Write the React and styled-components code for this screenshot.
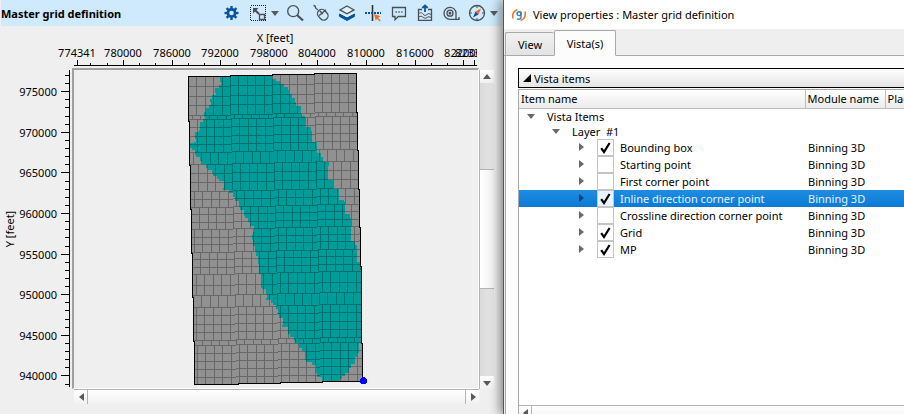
import React from 'react'
import styled, { createGlobalStyle } from 'styled-components'

const GlobalStyle = createGlobalStyle`
  * {
    box-sizing: border-box;
  }
  body {
    margin: 0;
    overflow: hidden;
    background: #efefef;
    color: #000;
    font-family: 'Noto Sans', 'Open Sans', sans-serif;
    font-size: 11px;
    line-height: 15px;
  }
  button {
    border: 0;
    padding: 0;
    background: none;
    color: inherit;
    font: inherit;
  }
`

const Workspace = styled.div`
  display: grid;
  grid-template-columns: minmax(0, 503fr) minmax(0, 401fr);
  height: 100vh;
`

/* map view */

const MapView = styled.section`
  display: flex;
  flex-direction: column;
  min-width: 0;
  padding: 0 2px 11px 1px;
`

const TitleBar = styled.header`
  display: flex;
  align-items: center;
  height: 26px;
  flex: none;
  background: #cfeafc;
`

const Title = styled.h1`
  flex: 1;
  margin: 0;
  font-size: 11px;
  font-weight: 700;
  white-space: nowrap;
`

const Tool = styled.button`
  display: flex;
  align-items: center;
  justify-content: ${props => props.$narrow ? 'flex-start' : 'center'};
  width: ${props => props.$narrow ? 11 : 26}px;
  height: 26px;
`

const Chart = styled.div`
  flex: 1;
  min-height: 0;
  display: grid;
  grid-template-columns: 71px minmax(0, 1fr) 15px;
  grid-template-rows: 42px minmax(0, 1fr) 15px;
  padding-right: 7px;
`

const Axis = styled.svg`
  display: block;
  width: calc(100% - 2px);
  height: 100%;
  overflow: hidden;
  grid-column: ${props => props.$column};
  grid-row: ${props => props.$row};
  font-size: 11px;

  line {
    stroke: #000;
    shape-rendering: crispEdges;
  }
`

const Plot = styled.div`
  grid-column: 2;
  grid-row: 2;
  overflow: hidden;
  border: solid;
  border-width: 2px 1px 1px 2px;
  border-color: #a0a0a0 #fff #fff #a0a0a0;

  svg {
    display: block;
  }
`

const ScrollBar = styled.div`
  display: flex;
  flex-direction: ${props => props.$vertical ? 'column' : 'row'};
  grid-column: ${props => props.$vertical ? 3 : 2};
  grid-row: ${props => props.$vertical ? 2 : 3};
  border: solid #b4b4b4;
  border-width: ${props => props.$vertical ? '0 0 0 1px' : '1px 0 0 0'};
  margin: ${props => props.$vertical ? '2px 0 0 0' : '0 0 0 2px'};
  background: linear-gradient(${props => props.$vertical ? 'to right' : 'to bottom'}, #dadada, #e6e6e6);
`

const Arrow = styled.button`
  display: flex;
  align-items: center;
  justify-content: center;
  flex: 0 0 13px;
  background: linear-gradient(#fff, #f1f1f1);
`

const Groove = styled.div`
  flex: ${props => props.$size} 1 0;
`

const Handle = styled.div`
  flex: ${props => props.$size} 1 0;
  border: solid #b4b4b4;
  border-width: ${props => props.$vertical ? '1px 0' : '0 1px'};
  background: linear-gradient(${props => props.$vertical ? 'to right' : 'to bottom'}, #fff, #f1f1f1);
`

/* properties dialog */

const Dialog = styled.section`
  position: relative;
  display: flex;
  flex-direction: column;
  min-width: 0;
  border-left: 1px solid #555;
  background: #efefef;
  box-shadow: -3px 0 10px rgba(0, 0, 0, 0.45);
`

const DialogTitle = styled.header`
  display: flex;
  align-items: center;
  gap: 7px;
  flex: none;
  height: 29px;
  padding-left: 8px;
  background: #fff;
  white-space: nowrap;

  h2 {
    margin: 0;
    font-size: 11px;
    font-weight: 400;
  }
`

const Tabs = styled.div`
  display: flex;
  align-items: flex-end;
  flex: none;
  height: 27px;
  padding-left: 1px;
  box-shadow: inset 0 -1px #a9a9a9;
`

const Tab = styled.button`
  width: ${props => props.$active ? 62 : 49}px;
  height: ${props => props.$active ? 26 : 24}px;
  border: 1px solid #a9a9a9;
  border-right-width: ${props => props.$active ? 1 : 0}px;
  border-bottom-color: ${props => props.$active ? '#fcfcfc' : '#a9a9a9'};
  border-radius: 2px 2px 0 0;
  background: ${props => props.$active ? '#fcfcfc' : 'linear-gradient(#f1f1f1, #e3e3e3)'};
`

const Panel = styled.div`
  flex: 1;
  display: flex;
  flex-direction: column;
  min-height: 0;
  margin-left: 1px;
  padding: 12px 0 0 12px;
  border-left: 1px solid #a9a9a9;
  background: #fcfcfc;
`

const Section = styled.button`
  display: flex;
  align-items: center;
  gap: 3px;
  flex: none;
  height: 20px;
  padding-left: 4px;
  border: 1px solid #000;
  border-right: 0;
  background: linear-gradient(#fff, #e4e4e4);
`

const Tree = styled.div`
  flex: 1;
  min-height: 0;
  display: flex;
  flex-direction: column;
  overflow: hidden;
  margin-top: 1px;
  border: 1px solid #a9a9a9;
  border-right: 0;
  border-bottom: 0;
  background: #fff;
`

const Table = styled.table`
  flex: none;
  table-layout: fixed;
  width: 450px;
  border-collapse: collapse;
`

const HeadCell = styled.th`
  width: ${props => props.$width};
  height: 18px;
  padding: 0 0 0 2px;
  border: solid #bdbdbd;
  border-width: 0 1px 1px 0;
  background: linear-gradient(#fff, #ebebeb);
  font-weight: 400;
  text-align: left;
  white-space: nowrap;
`

const Row = styled.tr`
  height: ${props => props.$group ? 15 : 17}px;
  color: ${props => props.$selected ? '#e4f3ff' : '#000'};
  background: ${props => props.$selected ? 'linear-gradient(#1f8ce0, #0a7ad6)' : 'none'};
`

const Cell = styled.td`
  padding: 0 0 0 ${props => props.$indent || 3}px;
  white-space: nowrap;
`

const Item = styled.div`
  display: flex;
  align-items: center;
  height: ${props => props.$group ? 15 : 17}px;
`

const Expander = styled.button`
  display: flex;
  justify-content: center;
  width: 10px;
  margin-right: ${props => props.$gap}px;
`

const Check = styled.input`
  appearance: none;
  width: 17px;
  height: 17px;
  margin: 0 6px 0 0;
  border: 1px solid #c4c4c4;
  background: ${props => props.$selected ? '#e8f3fc' : '#fff'};

  &:checked {
    background-image: url("data:image/svg+xml,%3Csvg xmlns='http://www.w3.org/2000/svg' viewBox='0 0 15 15'%3E%3Cpath d='M3.2 8.2 6 12l5.600-9' fill='none' stroke='%23000' stroke-width='2.200'/%3E%3C/svg%3E");
  }
`

const BottomScroll = styled.div`
  display: flex;
  flex: none;
  height: 15px;
  margin: auto 0 -5px;
  border-top: 1px solid #b4b4b4;
  background: linear-gradient(#fff, #f1f1f1);

  button {
    border-right: 1px solid #b4b4b4;
  }
`

const shapes = {
  up: 'M0 5 4 0l4 5z',
  down: 'M0 1h8L4 6z',
  left: 'M6 0v8L1 4z',
  right: 'M1 0v8l5-4z',
}

const Triangle = ({ dir, color = '#5a5a5a', size = 8 }) => (
  <svg width={size} height={size} viewBox={dir === 'up' || dir === 'down' ? '0 -1 8 8' : '-1 0 8 8'}>
    <path d={shapes[dir]} fill={color}/>
  </svg>
)

const ink = '#4a4f55'
const blue = '#0b529c'
const orange = '#f36c21'

const Icon = ({ children }) => (
  <svg width="18" height="18" viewBox="0 0 18 18" fill="none" stroke={ink} strokeWidth="1.3">
    {children}
  </svg>
)

const tools = [
  ['Settings', <Icon>
    <circle cx="8.500" cy="9" r="3.600" stroke={blue} strokeWidth="2.6"/>
    {[0, 45, 90, 135, 180, 225, 270, 315].map(a => (
      <path key={a} d="M8.500 2v3" stroke={blue} strokeWidth="2.400" transform={`rotate(${a} 8.500 9)`}/>
    ))}
  </Icon>],
  ['Select', <Icon>
    <path d="M1.500 1.500h15v15h-15z" strokeDasharray="1 1" stroke="#222" shapeRendering="crispEdges"/>
    <path d="M10.500 10.500h5v5h-5z" fill="#cfeafc"/>
    <path d="M4 4h5.500L4 9.500z" fill={ink} stroke="none"/>
    <path d="m5 5 5 5" strokeWidth="2"/>
  </Icon>],
  ['Select options', null],
  ['Zoom', <Icon>
    <circle cx="7.200" cy="7.200" r="5.500"/>
    <path d="m11 11 6 5.500" strokeWidth="2.200"/>
  </Icon>],
  ['Mouse mode', <Icon>
    <path d="M1.500 1.500c2 0 2 1 2 2s1 1.500 2.500 2.300"/>
    <rect x="6.500" y="5" width="8.500" height="11.500" rx="4.200" transform="rotate(-42 10.700 10.700)"/>
    <path d="m7.200 11.600 6.800-5.800M7.800 6.800l3 3.200"/>
  </Icon>],
  ['Layers', <Icon>
    <path d="M1.500 10 9 13.800 16.500 10v2.400L9 16.500l-7.500-4.100z" fill={blue} stroke={blue} strokeWidth="1"/>
    <path d="m9 2 7 3.900-7 3.900-7-3.900z" fill="#e1f2fd"/>
    <path d="m3 9.200 6 3.200 6-3.200" stroke="#e1f2fd"/>
  </Icon>],
  ['Pick point', <Icon>
    <path d="M8.500 1v16" strokeWidth="1.600" stroke="#333"/>
    <path d="M1 9h16" strokeWidth="1.800" stroke={blue} strokeDasharray="2 1"/>
    <path d="m10 10 6.500 2.300-2.500 1.400 2.700 2.700-1 1-2.700-2.700-1.200 2z" fill={orange} stroke="none"/>
  </Icon>],
  ['Comment', <Icon>
    <path d="M2.500 3.500h13v9H8.300L5 15.800v-3.300H2.500z"/>
    <path d="M5.500 8h1.300m1.500 0h1.400m1.500 0h1.300" strokeWidth="1.600"/>
  </Icon>],
  ['Export image', <Icon>
    <path d="M6 5.500H2.500v10.800h13V5.500H12"/>
    <path d="M2.500 10c2-2 3.500-1.500 4.500 0s2.500 2 4 .5 2.500-1 4.500.5M2.500 13.200c2-1.500 3.500-1 4.500 0s2.500 1.500 4 .3 2.500-.7 4.500.3" strokeWidth="1"/>
    <path d="M9 8V3M6.300 4 9 1.500 11.700 4" stroke={blue} strokeWidth="1.800"/>
  </Icon>],
  ['Measure', <Icon>
    <path d="M8 15.300A6 6 0 1 1 14 9v6.300zM14 15.300h3.500M17 13v3"/>
    <circle cx="8" cy="9.200" r="3"/>
    <circle cx="8" cy="9.200" r=".8"/>
  </Icon>],
  ['Compass', <Icon>
    <circle cx="9" cy="9" r="7.500"/>
    <path d="M9 2v2M9 14v2M2 9h2M14 9h2" strokeWidth="1"/>
    <path d="m13 4.500-2.500 6-3-3z" fill={orange} stroke="none"/>
    <path d="m5 13.500 2.500-6 3 3z" fill={blue} stroke="none"/>
  </Icon>],
  ['Compass options', null],
]

const xLabels = ['774341', '780000', '786000', '792000', '798000', '804000', '810000', '816000', '822000', '823366']
const xPlaces = [77, 123, 172, 220, 269, 317, 366, 415, 463, 474]
const xMinor = [90, 107, 139, 155, 188, 204, 236, 252, 285, 301, 334, 350, 382, 398, 431, 447]

const XAxis = () => (
  <Axis $column="1 / 3" $row={1}>
    <g transform="translate(-1 -26)">
      <text x="275" y="42" textAnchor="middle">X [feet]</text>
      <line x1="74" x2="477" y1="65.500" y2="65.500"/>
      {xPlaces.map((x, i) => (
        <g key={x}>
          <text x={x} y="57" textAnchor="middle">{xLabels[i]}</text>
          <line x1={x + 0.5} x2={x + 0.5} y1="60" y2="66"/>
        </g>
      ))}
      {xMinor.map(x => <line key={x} x1={x + 0.5} x2={x + 0.5} y1="63" y2="66"/>)}
    </g>
  </Axis>
)

const yLabels = ['975000', '970000', '965000', '960000', '955000', '950000', '945000', '940000']
const yTicks = Array.from({ length: 39 }, (_, i) => Math.round(75 + i * 8.12))

const YAxis = () => (
  <Axis $column={1} $row={2}>
    <g transform="translate(-1 -68)">
      <text textAnchor="middle" transform="translate(14 229) rotate(-90)">Y [feet]</text>
      <line x1="69.500" x2="69.500" y1="70" y2="387"/>
      {yTicks.map((y, i) => (
        <line key={y} x1={i % 5 === 2 ? 61 : 65} x2="70" y1={y + 0.5} y2={y + 0.5}/>
      ))}
      {yLabels.map((label, i) => (
        <text key={label} x="57" y={yTicks[i * 5 + 2] + 5} textAnchor="end">{label}</text>
      ))}
    </g>
  </Axis>
)

// survey outline, walked in one pixel steps like the rasterised lines
const outline = 'M188.500 76.500H230.500V75.500H272.500V74.500H314.500V73.500H356.500V112.500H357.500V150.500H358.500V189.500H359.500V227.500H360.500V266.500H361V304.500H361.500V343.500H362.500V381.500H322.500V382.500H280.500V383.500H238.500V384.500H194.500V341.500H193.500V297.500H192.500V253.500H191.500V209.500H190.500V165.500H189.500V121.500H188.500Z'

const coverage = [
  [250, 75], [220, 76], [221, 82], [219, 85], [215, 88], [216, 93], [212, 95], [210, 99], [211, 102], [209, 105],
  [206, 108], [204, 112], [205, 117], [203, 119], [200, 122], [199, 130], [195, 132], [196, 139], [194, 142],
  [190, 143], [192, 148], [195, 150], [196, 155], [200, 157], [202, 161], [206, 164], [208, 168], [212, 170],
  [213, 173], [217, 176], [219, 179], [224, 181], [223, 188], [229, 190], [233, 193], [235, 197], [239, 201],
  [240, 207], [244, 210], [245, 216], [248, 218], [250, 222], [254, 226], [253, 232], [252, 235], [253, 240],
  [255, 246], [256, 252], [258, 256], [259, 264], [261, 274], [262, 288], [266, 289], [267, 294], [266, 298],
  [271, 300], [273, 303], [276, 305], [278, 309], [279, 315], [283, 318], [282, 325], [288, 327], [290, 334],
  [294, 337], [295, 341], [299, 343], [302, 348], [305, 351], [306, 360], [312, 362], [316, 365], [317, 373],
  [322, 377], [323, 381], [331, 382], [340, 382], [342, 379], [345, 376], [349, 373], [351, 368], [355, 364],
  [357, 357], [359, 353], [361, 343], [361, 290], [360, 266], [357, 262], [355, 245], [351, 241], [350, 218],
  [345, 214], [344, 202], [339, 200], [339, 191], [333, 189], [333, 182], [328, 180], [329, 166], [323, 162],
  [321, 157], [317, 153], [317, 144], [312, 142], [311, 131], [306, 127], [305, 118], [301, 116], [301, 108],
  [296, 106], [295, 102], [292, 98], [289, 94], [288, 90], [284, 87], [280, 84], [276, 81], [272, 79], [270, 76],
  [265, 75],
]
const coveragePath = `M${coverage[0]}` + coverage.slice(1).map(([x, y]) => `V${y}H${x}`).join('') + 'Z'

// horizontal bands of the bin grid; every other band is shifted sideways
const bands = [76, 115, 119, 152, 164, 191, 207, 229, 252, 274, 295, 307, 340, 345, 385]

const gridLines = () => {
  const lines = []
  for (let b = 0; b < bands.length - 1; b++) {
    const top = bands[b]
    const bottom = bands[b + 1]
    const rows = Math.max(1, Math.round((bottom - top) / 8.8))
    const drift = (top - 76) / 44
    const shift = b % 2 ? 3 : 0
    for (let col = 0; col < 5; col++) {
      const left = Math.round(188 + drift + col * 42)
      for (let r = 0; r < rows; r++) {
        const y = Math.round(top + r * (bottom - top) / rows) - col + 0.5
        lines.push(`M${left} ${y}h42`)
      }
      for (let k = 0; k < 5; k++) {
        const x = left + Math.round(k * 8.4) + shift + 0.5
        lines.push(`M${x} ${top - col}V${bottom - col}`)
      }
    }
  }
  return lines.join('')
}

const SurveyMap = () => (
  <Plot>
    <svg width="405" height="318" viewBox="74 70 405 318" shapeRendering="crispEdges">
      <clipPath id="survey"><path d={outline}/></clipPath>
      <path d={outline} fill="#919191"/>
      <path d={coveragePath} fill="#009c9a"/>
      <path d={gridLines()} clipPath="url(#survey)" stroke="#000" strokeOpacity="0.28" fill="none"/>
      <path d={outline} stroke="#000" fill="none"/>
      <circle cx="363.500" cy="380.500" r="3.500" fill="#00f"/>
    </svg>
  </Plot>
)

const Logo = () => (
  <svg width="14" height="14" viewBox="0 0 14 14" fill="none">
    <path d="M5.500 1.500C1 3 .2 6 .8 10.500" stroke="#f37a2c" strokeWidth="1.700"/>
    <path d="M8.500 12.500C13 11 13.800 8 13.200 3.500" stroke="#f37a2c" strokeWidth="1.700"/>
    <circle cx="7" cy="5.700" r="1.900" stroke="#2c80b8" strokeWidth="1.400"/>
    <path d="M9 3.500v6c0 1.800-2.600 2.200-4 1.200" stroke="#2c80b8" strokeWidth="1.400"/>
  </svg>
)

const items = [
  { name: 'Bounding box', checked: true },
  { name: 'Starting point' },
  { name: 'First corner point' },
  { name: 'Inline direction corner point', checked: true, selected: true },
  { name: 'Crossline direction corner point' },
  { name: 'Grid', checked: true },
  { name: 'MP', checked: true },
]

const GroupRow = ({ name, indent, gap }) => (
  <Row $group>
    <Cell $indent={indent} colSpan={3}>
      <Item $group>
        <Expander $gap={gap} aria-label={`Collapse ${name}`}><Triangle dir="down" color="#6a6a6a"/></Expander>
        {name}
      </Item>
    </Cell>
  </Row>
)

const ItemRow = ({ name, checked, selected }) => {
  const id = name.toLowerCase().replace(/ /g, '-')
  return <Row $selected={selected}>
    <Cell $indent={57}>
      <Item>
        <Expander $gap={11} aria-label={`Expand ${name}`}>
          <Triangle dir="right" color={selected ? '#0d3f6e' : '#6a6a6a'}/>
        </Expander>
        <Check id={id} type="checkbox" defaultChecked={checked} $selected={selected}/>
        <label htmlFor={id}>{name}</label>
      </Item>
    </Cell>
    <Cell>Binning 3D</Cell>
    <Cell/>
  </Row>
}

const PropertiesDialog = () => (
  <Dialog>
    <DialogTitle>
      <Logo/>
      <h2>View properties : Master grid definition</h2>
    </DialogTitle>
    <Tabs role="tablist">
      <Tab role="tab">View</Tab>
      <Tab role="tab" aria-selected $active>Vista(s)</Tab>
    </Tabs>
    <Panel>
      <Section>
        <svg width="8" height="8"><path d="M8 0v8H0z"/></svg>
        Vista items
      </Section>
      <Tree>
        <Table>
          <thead>
            <tr>
              <HeadCell $width="286px">Item name</HeadCell>
              <HeadCell $width="80px">Module name</HeadCell>
              <HeadCell>Place</HeadCell>
            </tr>
          </thead>
          <tbody>
            <GroupRow name="Vista Items" indent={7} gap={11}/>
            <GroupRow name={'Layer \u00a0#1'} indent={32} gap={11}/>
            {items.map(item => <ItemRow key={item.name} {...item}/>)}
          </tbody>
        </Table>
        <BottomScroll>
          <Arrow aria-label="Scroll left"><Triangle dir="left"/></Arrow>
        </BottomScroll>
      </Tree>
    </Panel>
  </Dialog>
)

export default function App() {
  return <Workspace>
    <GlobalStyle/>
    <MapView>
      <TitleBar>
        <Title>Master grid definition</Title>
        {tools.map(([label, icon]) => (
          <Tool key={label} aria-label={label} $narrow={!icon}>
            {icon || <Triangle dir="down"/>}
          </Tool>
        ))}
      </TitleBar>
      <Chart>
        <XAxis/>
        <YAxis/>
        <SurveyMap/>
        <ScrollBar $vertical>
          <Arrow aria-label="Scroll up"><Triangle dir="up"/></Arrow>
          <Groove $size={86}/>
          <Handle $vertical $size={118}/>
          <Groove $size={87}/>
          <Arrow aria-label="Scroll down"><Triangle dir="down"/></Arrow>
        </ScrollBar>
        <ScrollBar>
          <Arrow aria-label="Scroll left"><Triangle dir="left"/></Arrow>
          <Handle $size={1}/>
          <Arrow aria-label="Scroll right"><Triangle dir="right"/></Arrow>
        </ScrollBar>
      </Chart>
    </MapView>
    <PropertiesDialog/>
  </Workspace>
}
